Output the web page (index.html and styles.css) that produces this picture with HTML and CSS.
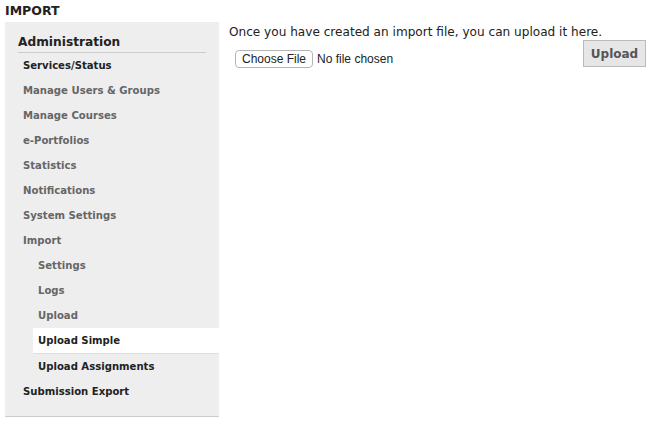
FILE: index.html
```html
<!DOCTYPE html>
<html>
<head>
<meta charset="utf-8">
<link rel="stylesheet" href="styles.css">
</head>
<body>
<div class="page">
  <h1 class="page-title">IMPORT</h1>
  <div class="layout">
    <nav class="sidebar">
      <h2 class="side-title">Administration</h2>
      <ul class="menu">
        <li class="item dark">Services/Status</li>
        <li class="item">Manage Users &amp; Groups</li>
        <li class="item">Manage Courses</li>
        <li class="item">e-Portfolios</li>
        <li class="item">Statistics</li>
        <li class="item">Notifications</li>
        <li class="item">System Settings</li>
        <li class="item">Import</li>
        <li>
          <ul class="submenu">
            <li class="item">Settings</li>
            <li class="item">Logs</li>
            <li class="item">Upload</li>
            <li class="item dark active">Upload Simple</li>
            <li class="item dark">Upload Assignments</li>
          </ul>
        </li>
        <li class="item dark">Submission Export</li>
      </ul>
    </nav>
    <main class="content">
      <p class="intro">Once you have created an import file, you can upload it here.</p>
      <form class="upload-form">
        <input type="file" class="file-input">
        <button type="button" class="upload-btn">Upload</button>
      </form>
    </main>
  </div>
</div>
</body>
</html>
```

FILE: styles.css
```css
html, body {
  margin: 0;
  padding: 0;
  background: #fff;
}
body {
  font-family: "DejaVu Sans", Verdana, sans-serif;
  color: #222;
}
.page {
  padding: 3px 5px 0 5px;
}
.page-title {
  margin: 0;
  font-size: 12.5px;
  font-weight: bold;
  line-height: 15px;
  height: 19px;
  color: #222;
}
.layout {
  display: flex;
  align-items: flex-start;
}
.sidebar {
  width: 214px;
  flex: none;
  background: #eee;
  border-bottom: 1px solid #ccc;
  padding: 0 0 12px 0;
}
.side-title {
  margin: 0 13px 0 13px;
  padding: 13px 0 3px 0;
  font-size: 12.2px;
  line-height: 14px;
  font-weight: bold;
  color: #222;
  border-bottom: 1px solid #ccc;
}
.menu, .submenu {
  list-style: none;
  margin: 0;
  padding: 0;
}
.item {
  font-size: 10.1px;
  font-weight: bold;
  line-height: 25px;
  height: 25px;
  padding-left: 18px;
  color: #666;
}
.item.dark {
  color: #222;
}
.submenu {
  margin-left: 28px;
}
.submenu .item {
  padding-left: 5px;
}
.submenu .item.active {
  background: #fff;
  border-bottom: 1px solid #ddd;
}
.content {
  flex: 1;
  padding-left: 10px;
}
.intro {
  margin: 0;
  padding-top: 2px;
  font-size: 12.1px;
  line-height: 16px;
  color: #222;
}
.upload-form {
  display: flex;
  align-items: flex-start;
  justify-content: space-between;
  padding-right: 2px;
}
.file-input {
  margin: 10px 0 0 6px;
  font-family: "Liberation Sans", Arial, sans-serif;
  font-size: 12px;
  color: #222;
}
.file-input::file-selector-button {
  font-family: "Liberation Sans", Arial, sans-serif;
  font-size: 12px;
  background: #fff;
  border: 1px solid #b5b5b5;
  border-radius: 4px;
  padding: 0 6px;
  height: 18px;
  margin-right: 4px;
  color: #222;
}
.upload-btn {
  margin-top: 0;
  width: 63px;
  height: 27px;
  background: #e6e6e6;
  border: 1px solid #bbb;
  font-family: "DejaVu Sans", Verdana, sans-serif;
  font-size: 12px;
  font-weight: bold;
  color: #555;
  padding: 0;
}
```
